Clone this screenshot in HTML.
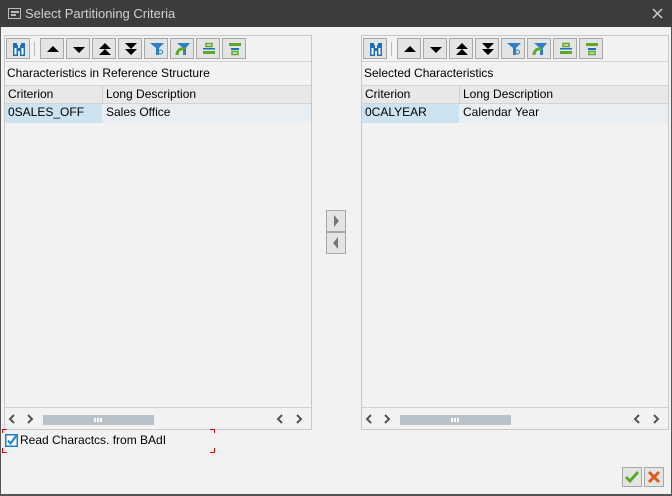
<!DOCTYPE html><html><head><style>
*{margin:0;padding:0;box-sizing:border-box}
body{width:672px;height:496px;background:#f2f2f2;font-family:"Liberation Sans",sans-serif;font-size:12px;color:#000;position:relative;overflow:hidden}
.abs{position:absolute}
#title{left:0;top:0;width:672px;height:27px;background:#3c3c3c;color:#d0d0d0;font-size:13px;line-height:27px;padding-left:25px}
.panel{position:absolute;top:35px;width:308px;height:395px;border:1px solid #c8c8c8;background:#f2f2f2}
.btn{position:absolute;top:2px;width:24px;height:21px;border:1px solid #a8a8a8;background:#e4e4e4}
.btn svg{position:absolute;left:3px;top:1px}
.lbl{position:absolute;left:2px;top:30px}
.hdr{position:absolute;left:0;top:49px;width:306px;height:19px;background:#e8e8e8;border-top:1px solid #d4d4d4;border-bottom:1px solid #d4d4d4}
.row{position:absolute;left:0;top:68px;width:306px;height:19px;background:#e9eef2}
.c1{position:absolute;left:0;width:98px;height:100%;padding:1px 3px;border-right:1px solid #d0d0d0}
.c2{position:absolute;left:98px;height:100%;padding:1px 3px}
.sb{position:absolute;left:0;top:371px;width:306px;height:22px;border-top:1px solid #d0d0d0}
.thumb{position:absolute;left:38px;top:7px;width:111px;height:10px;background:#b8c2cb}
.thumb i{position:absolute;top:3px;width:2px;height:4px;background:#fff}
.ar{position:absolute;top:6px}
</style></head><body>
<div id="title" class="abs">Select Partitioning Criteria</div>
<svg class="abs" style="left:8px;top:8px" width="14" height="12"><path d="M0.5 0.5H12.5V10.5H0.5Z" fill="none" stroke="#bbb"/><path d="M3 3h8v2H3zM3 6h5v2H3z" fill="#bbb"/></svg>
<svg class="abs" style="left:652px;top:8px" width="11" height="11"><path d="M1 1L10 10M10 1L1 10" stroke="#ccc" stroke-width="1.5"/></svg>
<div class="abs" style="left:0;top:27px;width:1px;height:469px;background:#555"></div>
<div class="abs" style="left:671px;top:27px;width:1px;height:469px;background:#555"></div>
<div class="abs" style="left:0;top:494px;width:672px;height:2px;background:#555"></div>

<div class="panel" style="left:4px">
 <div class="lbl">Characteristics in Reference Structure</div>
 <div class="hdr"><div class="c1">Criterion</div><div class="c2">Long Description</div></div>
 <div class="row"><div class="c1" style="background:#cde3f0;border-right:none;width:97px">0SALES_OFF</div><div class="c2">Sales Office</div></div>
 <div class="sb"></div>
</div>
<div class="panel" style="left:361px">
 <div class="lbl">Selected Characteristics</div>
 <div class="hdr"><div class="c1">Criterion</div><div class="c2">Long Description</div></div>
 <div class="row"><div class="c1" style="background:#cde3f0;border-right:none;width:97px">0CALYEAR</div><div class="c2">Calendar Year</div></div>
 <div class="sb"></div>
</div>

<div class="abs" style="left:326px;top:210px;width:20px;height:22px;border:1px solid #a8a8a8;background:#e4e4e4"><svg width="18" height="20"><path d="M7 4L12 10L7 16Z" fill="#777"/></svg></div>
<div class="abs" style="left:326px;top:232px;width:20px;height:22px;border:1px solid #a8a8a8;background:#e4e4e4"><svg width="18" height="20"><path d="M11 4L6 10L11 16Z" fill="#777"/></svg></div>

<svg class="abs" style="left:2px;top:429px" width="214" height="24"><path d="M0.5 4V0.5H5M0.5 19V23.5H5M208 0.5H212.5V4M208 23.5H212.5V19" fill="none" stroke="#e00" stroke-width="1"/></svg>
<div class="abs" style="left:5px;top:434px;width:13px;height:13px;background:#1a7fc5"><svg width="13" height="13"><rect x="1.5" y="1.5" width="10" height="10" fill="#fff"/><path d="M3 6.5L5.5 9.5L11 2" fill="none" stroke="#1a7fc5" stroke-width="2"/></svg></div>
<div class="abs" style="left:20px;top:433px;font-size:12px">Read Charactcs. from BAdI</div>

<div class="abs" style="left:622px;top:467px;width:20px;height:20px;border:1px solid #a8a8a8;background:#e4e4e4"><svg width="18" height="18"><path d="M3 9L7 13L15 4" fill="none" stroke="#5aaa2a" stroke-width="3"/></svg></div>
<div class="abs" style="left:644px;top:467px;width:20px;height:20px;border:1px solid #a8a8a8;background:#e4e4e4"><svg width="18" height="18"><path d="M4 4L14 14M14 4L4 14" stroke="#e05a1a" stroke-width="3"/></svg></div>

<script>
function tb(){
 var icons=[
 '<path d="M3 3h4v2h1v3h2V5h1V3h4v13h-5v-5H8v5H3z" fill="#1d6fb8"/><path d="M4.5 8h2v6.5h-2zM11.5 8h2v6.5h-2z" fill="#fff"/>',
 '<path d="M3 12L9 6L15 12Z" fill="#000"/>',
 '<path d="M3 7L9 13L15 7Z" fill="#000"/>',
 '<path d="M3 9L9 3L15 9ZM3 15L9 9L15 15Z" fill="#000"/>',
 '<path d="M3 3L9 9L15 3ZM3 9L9 15L15 9Z" fill="#000"/>',
 '<path d="M2 3h14l-5 5v7h-3v-7z" fill="#2a7fc6"/><circle cx="12.5" cy="12" r="2" fill="#e4e4e4" stroke="#2a7fc6"/>',
 '<path d="M3 3h13l-4 5v7h-3v-7z" fill="#2a7fc6"/><path d="M3 15c0-5 4-7 8-6" fill="none" stroke="#5aaa2a" stroke-width="3"/>',
 '<rect x="6" y="3.5" width="6" height="3" fill="none" stroke="#5aaa2a" stroke-width="1.5"/><rect x="3" y="8" width="12" height="1.5" fill="#1d6fb8"/><rect x="3" y="11" width="12" height="3" fill="#5aaa2a"/>',
 '<rect x="3" y="3" width="12" height="3" fill="#5aaa2a"/><rect x="5" y="8" width="8" height="2" fill="#1d6fb8"/><rect x="6" y="11.5" width="6" height="3" fill="none" stroke="#5aaa2a" stroke-width="1.5"/>'
 ];
 var lefts=[1,35,61,87,113,139,165,191,217],h='';
 for(var i=0;i<9;i++)h+='<div class="btn" style="left:'+lefts[i]+'px"><svg width="18" height="17">'+icons[i]+'</svg></div>';
 h+='<div style="position:absolute;left:29px;top:6px;width:1px;height:14px;background:#bbb"></div>';
 h+='<div style="position:absolute;left:0;top:25px;width:306px;height:1px;background:#d4d4d4"></div>';
 return h;
}
function chev(x,d){return '<svg class="ar" style="left:'+x+'px" width="8" height="10"><path d="'+(d?'M2 1L6 5L2 9':'M6 1L2 5L6 9')+'" fill="none" stroke="#555" stroke-width="2"/></svg>';}
var sbh=chev(3,0)+chev(21,1)+'<div class="thumb"><i style="left:51px"></i><i style="left:54px"></i><i style="left:57px"></i></div>'+chev(271,0)+chev(290,1);
var p=document.querySelectorAll('.panel');
for(var k=0;k<2;k++){p[k].insertAdjacentHTML('afterbegin',tb());p[k].querySelector('.sb').innerHTML=sbh;}
</script>
</body></html>
